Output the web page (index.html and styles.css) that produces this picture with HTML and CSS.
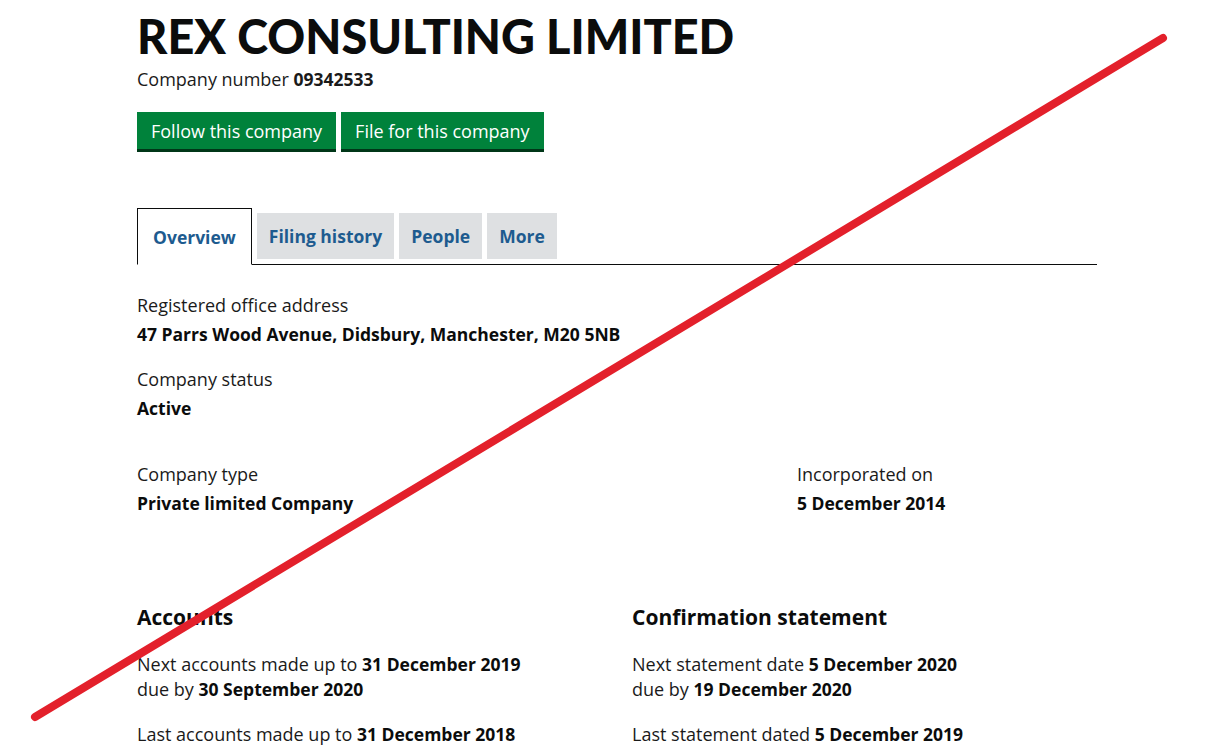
FILE: index.html
```html
<!DOCTYPE html>
<html lang="en">
<head>
<meta charset="utf-8">
<title>REX CONSULTING LIMITED</title>
<link rel="stylesheet" href="styles.css">
</head>
<body>
<main class="page">
  <h1 class="title">REX CONSULTING LIMITED</h1>
  <p class="number">Company number <strong>09342533</strong></p>
  <div class="actions">
    <a class="btn" href="#">Follow this company</a>
    <a class="btn" href="#">File for this company</a>
  </div>
  <nav class="tabs">
    <a class="tab active" href="#">Overview</a>
    <a class="tab" href="#">Filing history</a>
    <a class="tab" href="#">People</a>
    <a class="tab" href="#">More</a>
  </nav>
  <section class="overview">
    <div class="field">
      <div class="label">Registered office address</div>
      <div class="value">47 Parrs Wood Avenue, Didsbury, Manchester, M20 5NB</div>
    </div>
    <div class="field">
      <div class="label">Company status</div>
      <div class="value">Active</div>
    </div>
    <div class="row3">
      <div class="field">
        <div class="label">Company type</div>
        <div class="value">Private limited Company</div>
      </div>
      <div class="field">
        <div class="label">Incorporated on</div>
        <div class="value">5 December 2014</div>
      </div>
    </div>
    <div class="row2">
      <div class="block">
        <h2 class="subhead">Accounts</h2>
        <p class="line">Next accounts made up to <strong>31 December 2019</strong><br>due by <strong>30 September 2020</strong></p>
        <p class="line">Last accounts made up to <strong>31 December 2018</strong></p>
      </div>
      <div class="block">
        <h2 class="subhead">Confirmation statement</h2>
        <p class="line">Next statement date <strong>5 December 2020</strong><br>due by <strong>19 December 2020</strong></p>
        <p class="line">Last statement dated <strong>5 December 2019</strong></p>
      </div>
    </div>
  </section>
</main>
<svg class="strike" width="1216" height="745" viewBox="0 0 1216 745" aria-hidden="true">
  <line x1="35" y1="717" x2="1163" y2="38" stroke="#e3202b" stroke-width="8" stroke-linecap="round"/>
</svg>
</body>
</html>
```

FILE: styles.css
```css
html, body {
  margin: 0;
  padding: 0;
  background: #ffffff;
}
body {
  font-family: "Open Sans", "Liberation Sans", Arial, sans-serif;
  color: #0b0c0c;
  overflow: hidden;
  height: 745px;
}
.page {
  width: 960px;
  margin-left: 137px;
  padding-top: 11px;
}
.title {
  margin: 0;
  font-family: Lato, "Liberation Sans", Arial, sans-serif;
  font-size: 46.8px;
  line-height: 50px;
  font-weight: 900;
}
.number {
  margin: 7px 0 0;
  font-size: 18px;
  line-height: 22px;
  color: #1a1a1a;
}
.number strong { font-weight: 700; font-size: 17.5px; }
.actions {
  display: flex;
  gap: 5px;
  margin-top: 22px;
}
.btn {
  display: block;
  background: #00823b;
  color: #ffffff;
  text-decoration: none;
  font-size: 18px;
  line-height: 22px;
  padding: 8px 14px 7px;
  box-shadow: 0 3px 0 #003618;
  margin-bottom: 3px;
}
.tabs {
  display: flex;
  align-items: flex-end;
  gap: 5px;
  margin-top: 56px;
  border-bottom: 1px solid #0b0c0c;
  height: 56px;
}
.tab {
  display: block;
  background: #dee0e2;
  color: #1d5b8f;
  font-weight: 700;
  font-size: 17.5px;
  line-height: 22px;
  text-decoration: none;
  padding: 12px 12px 12px;
  margin-bottom: 5px;
}
.tab.active {
  background: #ffffff;
  border: 1px solid #0b0c0c;
  border-bottom: 1px solid #ffffff;
  padding: 17px 15px 16px;
  margin-bottom: -1px;
}
.overview { padding-top: 29px; }
.field { margin-bottom: 23px; }
.label {
  font-size: 18px;
  line-height: 22px;
  color: #1a1a1a;
}
.value {
  margin-top: 7px;
  font-size: 17.5px;
  line-height: 22px;
  font-weight: 700;
}
.row3 {
  display: grid;
  grid-template-columns: 630px 300px;
  column-gap: 30px;
  margin-top: 44px;
}
.row2 {
  display: grid;
  grid-template-columns: 465px 465px;
  column-gap: 30px;
  margin-top: 67px;
}
.subhead {
  margin: 0;
  font-size: 21px;
  line-height: 26px;
  font-weight: 700;
}
.line {
  margin: 22px 0 0;
  font-size: 18px;
  line-height: 25px;
  color: #1a1a1a;
}
.line + .line { margin-top: 20px; }
.line strong { font-weight: 700; font-size: 17.5px; color: #0b0c0c; }
.strike {
  position: absolute;
  left: 0;
  top: 0;
  pointer-events: none;
}
```
